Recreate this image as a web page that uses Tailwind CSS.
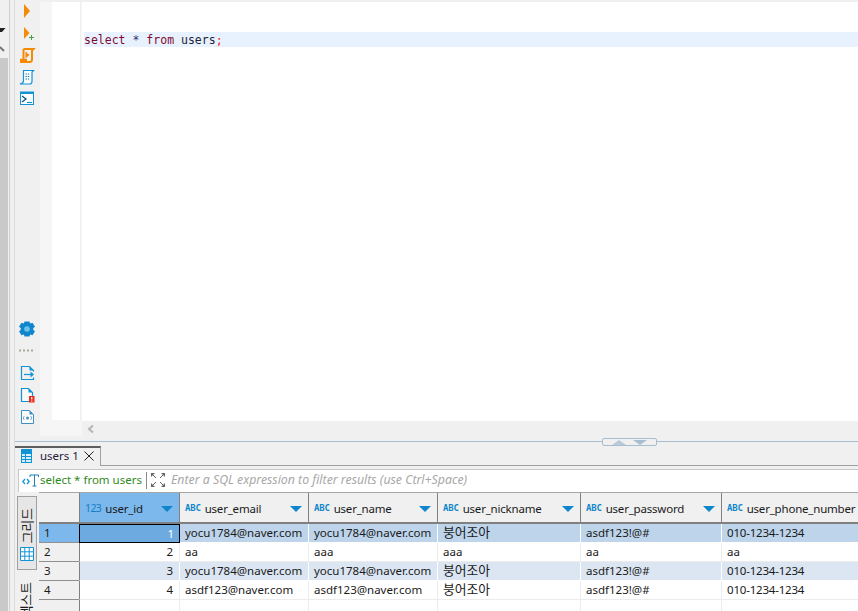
<!DOCTYPE html>
<html lang="ko">
<head>
<meta charset="UTF-8" />
<title>users</title>
<script src="https://cdn.jsdelivr.net/npm/@tailwindcss/browser@4"></script>
</head>
<body class="bg-[#f0f0f0]">
<div class="flex h-[611px] w-[858px] overflow-hidden bg-[#f0f0f0] font-['Noto_Sans','Noto_Sans_CJK_KR',sans-serif] text-[11.5px] text-[#1a1a1a]">

  <!-- left edge -->
  <div class="flex h-full w-[15px] border-r border-[#dcdcdc]">
    <div class="flex h-full w-[8px] flex-col">
      <div class="h-[58px] bg-[#f0f0f0]">
        <svg width="8" height="58" viewBox="0 0 8 58">
          <polygon points="0,28 5.5,28 2,32 0,32" fill="#222" />
          <path d="M0 47 L4 51" stroke="#777" stroke-width="2" fill="none" />
        </svg>
      </div>
      <div class="flex-1 bg-[#c9c9c9]"></div>
    </div>
    <div class="ml-[1px] h-full w-[1px] bg-[#cfcfcf]"></div>
  </div>

  <div class="flex min-w-0 flex-1 flex-col">
    <!-- editor area -->
    <div class="flex h-[441px]">
      <div class="flex h-full w-[25px] flex-col">
        <svg width="25" height="22" viewBox="0 0 25 22"><polygon points="9,4 15,11 9,18" fill="#f58a07" /></svg>
        <svg width="25" height="22" viewBox="0 0 25 22"><polygon points="9,5 14.5,11 9,17" fill="#f58a07" /><path d="M14 15.5h5M16.5 13v5" stroke="#4aa34a" stroke-width="1" fill="none" /></svg>
        <svg width="25" height="22" viewBox="0 0 25 22"><path d="M8.500 5h10l-1.500 1.500v9c0 1.500-1 2.500-2.500 2.500H5" fill="none" stroke="#f58a07" stroke-width="2" /><path d="M8.500 5v10" stroke="#f58a07" stroke-width="2" /><polygon points="10.500,7.500 14.500,11 10.500,14.500" fill="#f58a07" /><path d="M5 16h7" stroke="#f58a07" stroke-width="2.400" /></svg>
        <svg width="25" height="22" viewBox="0 0 25 22"><path d="M8.500 4.500h10l-1.500 1.500v9.500c0 1.500-1 2.500-2.500 2.500H5c2-.5 3.500-1 3.500-3z" fill="#fff" stroke="#1293d4" stroke-width="1.200" /><path d="M10.500 8h4.500M10.500 10.500h4.500M10.500 13h4.500" stroke="#1c7fb6" stroke-width="1.200" stroke-dasharray="1.500 .8" fill="none" /></svg>
        <svg width="25" height="22" viewBox="0 0 25 22"><rect x="5.500" y="4.500" width="13" height="12" fill="#fff" stroke="#1293d4" /><rect x="5" y="3.500" width="14" height="2.500" fill="#1293d4" /><path d="M7 8l4 3-4 3" stroke="#10507e" stroke-width="1.300" fill="none" /><path d="M12 14.500h5" stroke="#1293d4" stroke-width="1.200" /></svg>

        <div class="mt-auto flex flex-col pb-[13px]">
          <svg width="25" height="22" viewBox="0 0 25 22"><path d="M9.500 3.500h5l.6 2 2.400-.8 2.500 4-1.700 1.300v2l1.700 1.300-2.500 4-2.400-.8-.6 2h-5l-.6-2-2.400.8-2.500-4L5.700 12v-2L4 8.700l2.500-4 2.400.8z" fill="#0f86cb" /><circle cx="12" cy="11" r="2.800" fill="#6cc0ea" /></svg>
          <svg width="25" height="22" viewBox="0 0 25 22"><path d="M4 10.500h2M8 10.500h2M12 10.500h2M16 10.500h2" stroke="#aaa89e" stroke-width="2" fill="none" /></svg>
          <svg width="25" height="22" viewBox="0 0 25 22"><path d="M18.500 9.500v-1l-4-4h-8v13h12v-2" fill="#f0f0f0" stroke="#1293d4" stroke-width="1.200" /><path d="M14.500 4.500l4 4h-4z" fill="#1293d4" /><path d="M9 12.500h9" stroke="#1293d4" stroke-width="1.200" /><path d="M15.500 9.500l3.500 3-3.500 3z" fill="#1293d4" /></svg>
          <svg width="25" height="22" viewBox="0 0 25 22"><path d="M6.500 4.500h7l4 4v9h-11z" fill="#f8f8f8" stroke="#1293d4" stroke-width="1.200" /><path d="M13.500 4.500l4 4h-4z" fill="#1293d4" /><rect x="14" y="12" width="5.500" height="6.500" fill="#ee2a1a" /><path d="M16.750 13v2.500M16.750 16.500v1" stroke="#fff" stroke-width="1.200" /></svg>
          <svg width="25" height="22" viewBox="0 0 25 22"><path d="M6.500 4.500h8l4 4v9h-12z" fill="#fdfdfd" stroke="#3d8fc9" /><path d="M14.500 4.500l4 4h-4z" fill="#3d8fc9" /><path d="M9.500 10c-1.500 1-1.500 3 0 4M15.500 10c1.500 1 1.500 3 0 4" stroke="#7aa8cc" fill="none" /><circle cx="12.500" cy="12" r="1.500" fill="#3d8fc9" /></svg>
        </div>
      </div>

      <div class="flex min-w-0 flex-1 pt-[2px]">
        <div class="h-[434px] w-[42px] bg-[#f6f6f6] pl-[12px]">
          <div class="h-[418px] w-[29px] border-r border-[#efefef] bg-white"></div>
        </div>
        <div class="flex min-w-0 flex-1 flex-col">
          <div class="h-[419px] bg-white pt-[30px] pl-[2px]">
            <div class="h-[15px] bg-[#e8f2fe] font-['DejaVu_Sans_Mono',monospace] text-[11.5px] leading-[16px] whitespace-pre"><span class="text-[#7f0a30]">select</span> <span class="text-[#2a3a78]">*</span> <span class="text-[#7f0a30]">from</span> <span class="text-[#1c2438]">users</span><span class="text-[#ee2222]">;</span></div>
          </div>
          <div class="flex h-[15px] items-center pl-[5px]">
            <svg width="8" height="10" viewBox="0 0 8 10"><path d="M6 1.500L2 5l4 3.500" stroke="#b4b4b4" stroke-width="2" fill="none" /></svg>
          </div>
        </div>
      </div>
    </div>

    <!-- sash -->
    <div class="relative h-[5px] border-t border-[#a9bdd1]">
      <div class="absolute top-[-4px] left-[587px] flex h-[8px] w-[55px] items-center justify-center gap-[5px] rounded-[2px] border border-[#a9bdd1] bg-[#f0f0f0]">
        <svg width="16" height="5" viewBox="0 0 16 5"><polygon points="8,0 15,5 1,5" fill="#b9c9d8" /></svg>
        <svg width="16" height="5" viewBox="0 0 16 5"><polygon points="1,0 15,0 8,5" fill="#a9bdd1" /></svg>
      </div>
    </div>

    <!-- result tab -->
    <div class="flex h-[20px]">
      <div class="flex w-[86px] items-center border-t-2 border-r border-[#5e5e5e] border-r-[#a0a0a0] pb-[2px] pl-[6px]">
        <svg width="12" height="14" viewBox="0 0 12 14"><rect x="0" y="0" width="11" height="14" fill="#1293d4" /><path d="M1 5h3v2H1zM5 5h5v2H5zM1 8h3v2H1zM5 8h5v2H5zM1 11h3v2H1zM5 11h5v2H5z" fill="#d8eefa" /></svg>
        <span class="ml-[7px] w-[44px] text-[#2a1a3a]">users 1</span>
        <svg width="10" height="10" viewBox="0 0 10 10"><path d="M.5.5l9 9M9.500.5l-9 9" stroke="#222" fill="none" /></svg>
      </div>
      <div class="flex-1 border-b border-[#a0a0a0]"></div>
    </div>

    <!-- filter -->
    <div class="mt-[3px] ml-[3px] flex h-[23px] items-center border-t border-l border-[#c8c8c8] bg-white pb-[2px]">
      <svg class="ml-[3px]" width="17" height="13" viewBox="0 0 17 13"><path d="M3 5L.8 7.500 3 10M5 5l2.200 2.500L5 10" stroke="#1293d4" stroke-width="1.200" fill="none" /><path d="M8 3V1h8.500v2M12.500 1v11M10.500 12h4" stroke="#1d7fb4" fill="none" /></svg>
      <span class="ml-[1px] text-[#2f8a1e]">select * from users</span>
      <div class="mr-[3px] ml-[4px] h-[17px] w-[1px] bg-[#8a8a8a]"></div>
      <svg width="16" height="16" viewBox="0 0 16 16"><path d="M1 1h4L1 5zM15 1h-4l4 4zM1 15h4l-4-4zM15 15h-4l4-4z" fill="#666" /><path d="M2 2l4 4M14 2l-4 4M2 14l4-4M14 14l-4-4" stroke="#666" fill="none" /></svg>
      <span class="ml-[5px] text-[12.3px] whitespace-nowrap text-[#a8a8a8] italic">Enter a SQL expression to filter results (use Ctrl+Space)</span>
    </div>

    <!-- results -->
    <div class="flex min-h-0 flex-1">
      <div class="flex w-[24px] flex-col overflow-hidden pt-[4px]">
        <div class="ml-[2px] flex h-[74px] w-[20px] shrink-0 flex-col items-center border border-[#a0a0a0] bg-[#e6e6e6] pt-[11px]">
          <span class="rotate-180 text-[12.8px] leading-none whitespace-nowrap [text-orientation:sideways] [writing-mode:vertical-rl]">그리드</span>
          <svg class="mt-[4px]" width="14" height="14" viewBox="0 0 14 14"><path d="M.5.5h13v13H.5zM.5 4.800h13M.5 9.200h13M4.800.5v13M9.200.5v13" fill="#fff" stroke="#1293d4" /></svg>
        </div>
        <span class="mt-[12px] ml-[5px] shrink-0 rotate-180 self-start text-[12.8px] leading-none whitespace-nowrap [text-orientation:sideways] [writing-mode:vertical-rl]">텍스트</span>
      </div>

      <div class="grid min-w-0 flex-1 auto-rows-[19px] grid-cols-[40px_101px_129px_129px_143px_141px_136px] grid-rows-[31px] border-t border-[#a6a6a6]">
        <div class="border-b-2 border-[#808080]"></div>
        <div class="flex items-center border-r border-b-2 border-l border-[#808080] bg-[#7db8ec] px-[5px] pt-[2px] tracking-[-0.2px]"><span class="text-[10.5px] tracking-[-0.6px] text-[#0f7fc4]">123</span><span class="ml-[4px]">user_id</span><svg class="mr-[1px] ml-auto" width="12" height="6" viewBox="0 0 12 6"><polygon points="0,0 12,0 6,6" fill="#0f86cb" /></svg></div>
        <div class="flex items-center border-r border-b-2 border-[#808080] px-[5px] pt-[2px] tracking-[-0.2px]"><span class="font-['DejaVu_Sans_Mono',monospace] text-[9px] font-bold text-[#0f86cb]">ABC</span><span class="ml-[4px]">user_email</span><svg class="mr-[1px] ml-auto" width="12" height="6" viewBox="0 0 12 6"><polygon points="0,0 12,0 6,6" fill="#0f86cb" /></svg></div>
        <div class="flex items-center border-r border-b-2 border-[#808080] px-[5px] pt-[2px] tracking-[-0.2px]"><span class="font-['DejaVu_Sans_Mono',monospace] text-[9px] font-bold text-[#0f86cb]">ABC</span><span class="ml-[4px]">user_name</span><svg class="mr-[1px] ml-auto" width="12" height="6" viewBox="0 0 12 6"><polygon points="0,0 12,0 6,6" fill="#0f86cb" /></svg></div>
        <div class="flex items-center border-r border-b-2 border-[#808080] px-[5px] pt-[2px] tracking-[-0.2px]"><span class="font-['DejaVu_Sans_Mono',monospace] text-[9px] font-bold text-[#0f86cb]">ABC</span><span class="ml-[4px]">user_nickname</span><svg class="mr-[1px] ml-auto" width="12" height="6" viewBox="0 0 12 6"><polygon points="0,0 12,0 6,6" fill="#0f86cb" /></svg></div>
        <div class="flex items-center border-r border-b-2 border-[#808080] px-[5px] pt-[2px] tracking-[-0.2px]"><span class="font-['DejaVu_Sans_Mono',monospace] text-[9px] font-bold text-[#0f86cb]">ABC</span><span class="ml-[4px]">user_password</span><svg class="mr-[1px] ml-auto" width="12" height="6" viewBox="0 0 12 6"><polygon points="0,0 12,0 6,6" fill="#0f86cb" /></svg></div>
        <div class="flex items-center overflow-hidden border-b-2 border-[#808080] pt-[2px] pl-[5px] tracking-[-0.2px]"><span class="font-['DejaVu_Sans_Mono',monospace] text-[9px] font-bold text-[#0f86cb]">ABC</span><span class="ml-[4px] whitespace-nowrap">user_phone_number</span></div>

        <div class="flex items-center border-b border-[#909090] bg-[#7db8ec] pl-[5px]">1</div>
        <div class="flex items-center justify-end border border-black bg-[#6daae0] pr-[5px] text-white">1</div>
        <div class="flex items-center border-r border-b border-white bg-[#bdd4ea] pl-[5px]">yocu1784@naver.com</div>
        <div class="flex items-center border-r border-b border-white bg-[#bdd4ea] pl-[5px]">yocu1784@naver.com</div>
        <div class="flex items-center border-r border-b border-white bg-[#bdd4ea] pl-[5px] text-[12.8px]">붕어조아</div>
        <div class="flex items-center border-r border-b border-white bg-[#bdd4ea] pl-[5px]">asdf123!@#</div>
        <div class="flex items-center border-b border-white bg-[#bdd4ea] pl-[5px] tracking-[-0.2px]">010-1234-1234</div>

        <div class="flex items-center border-b border-[#909090] pl-[5px]">2</div>
        <div class="flex items-center justify-end border-r border-b border-l border-[#ececec] border-l-[#808080] bg-white pr-[6px]">2</div>
        <div class="flex items-center border-r border-b border-[#ececec] bg-white pl-[5px]">aa</div>
        <div class="flex items-center border-r border-b border-[#ececec] bg-white pl-[5px]">aaa</div>
        <div class="flex items-center border-r border-b border-[#ececec] bg-white pl-[5px]">aaa</div>
        <div class="flex items-center border-r border-b border-[#ececec] bg-white pl-[5px]">aa</div>
        <div class="flex items-center border-b border-[#ececec] bg-white pl-[5px]">aa</div>

        <div class="flex items-center border-b border-[#909090] pl-[5px]">3</div>
        <div class="flex items-center justify-end border-r border-b border-l border-white border-l-[#808080] bg-[#dce6f2] pr-[6px]">3</div>
        <div class="flex items-center border-r border-b border-white bg-[#dce6f2] pl-[5px]">yocu1784@naver.com</div>
        <div class="flex items-center border-r border-b border-white bg-[#dce6f2] pl-[5px]">yocu1784@naver.com</div>
        <div class="flex items-center border-r border-b border-white bg-[#dce6f2] pl-[5px] text-[12.8px]">붕어조아</div>
        <div class="flex items-center border-r border-b border-white bg-[#dce6f2] pl-[5px]">asdf123!@#</div>
        <div class="flex items-center border-b border-white bg-[#dce6f2] pl-[5px] tracking-[-0.2px]">010-1234-1234</div>

        <div class="flex items-center border-b border-[#909090] pl-[5px]">4</div>
        <div class="flex items-center justify-end border-r border-b border-l border-[#ececec] border-l-[#808080] bg-white pr-[6px]">4</div>
        <div class="flex items-center border-r border-b border-[#ececec] bg-white pl-[5px]">asdf123@naver.com</div>
        <div class="flex items-center border-r border-b border-[#ececec] bg-white pl-[5px]">asdf123@naver.com</div>
        <div class="flex items-center border-r border-b border-[#ececec] bg-white pl-[5px] text-[12.8px]">붕어조아</div>
        <div class="flex items-center border-r border-b border-[#ececec] bg-white pl-[5px]">asdf123!@#</div>
        <div class="flex items-center border-b border-[#ececec] bg-white pl-[5px] tracking-[-0.2px]">010-1234-1234</div>

        <div></div>
        <div class="border-r border-l border-[#ececec] border-l-[#808080] bg-white"></div>
        <div class="border-r border-[#ececec] bg-white"></div>
        <div class="border-r border-[#ececec] bg-white"></div>
        <div class="border-r border-[#ececec] bg-white"></div>
        <div class="border-r border-[#ececec] bg-white"></div>
        <div class="bg-white"></div>
      </div>
    </div>
  </div>
</div>
</body>
</html>
